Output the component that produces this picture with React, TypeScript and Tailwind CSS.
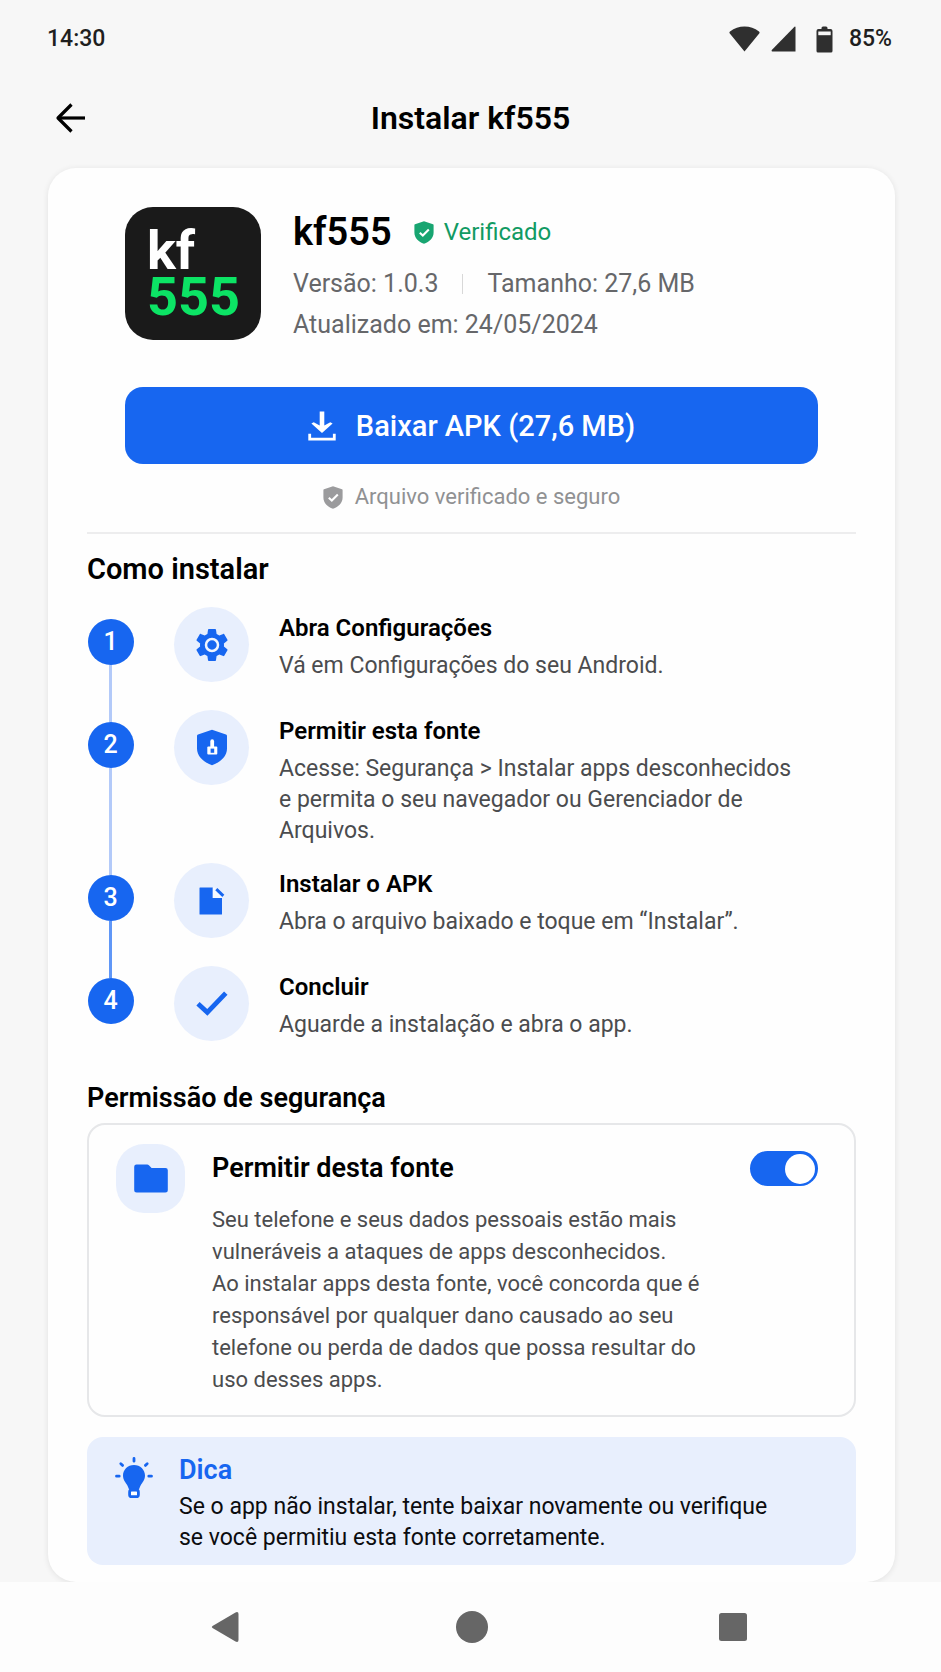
import { useState } from "react";
import type { ReactNode } from "react";

type Step = {
  title: string;
  text: string;
  icon: ReactNode;
  lineAbove: string;
  lineBelow: string;
};

function WifiIcon() {
  return (
    <svg width="31" height="26" viewBox="0 0 31 26" fill="#2f2f2f" aria-hidden="true">
      <path d="M15.500 25.500 L0.600 7.200 Q0 6.300 1 5.600 Q7.500 0.600 15.500 0.600 Q23.500 0.600 30 5.600 Q31 6.300 30.400 7.200 Z" />
    </svg>
  );
}

function SignalIcon() {
  return (
    <svg width="25" height="26" viewBox="0 0 25 26" fill="#2f2f2f" aria-hidden="true">
      <path d="M24.500 1 V25.500 H1.200 Q0 25 0.800 24 L23.500 0.800 Q24.300 0.200 24.500 1 Z" />
    </svg>
  );
}

function BatteryIcon() {
  return (
    <svg width="17" height="27" viewBox="0 0 17 27" aria-hidden="true">
      <path
        fill="#2f2f2f"
        d="M5.500 2 Q5.500 0.500 7 0.500 H10 Q11.500 0.500 11.500 2 V3 H14.500 Q16.500 3 16.500 5 V25 Q16.500 26.500 15 26.500 H2 Q0.500 26.500 0.500 25 V5 Q0.500 3 2.500 3 H5.500 Z"
      />
      <rect x="2.300" y="5.500" width="12.400" height="3.700" fill="#f7f7f7" />
    </svg>
  );
}

function ShieldCheck({ color }: { color: string }) {
  return (
    <svg width="20" height="23" viewBox="0 0 20 23" aria-hidden="true" className="shrink-0">
      <path
        fill={color}
        d="M10 0.300 L19 3.300 Q19.600 3.500 19.600 4.200 V11.500 C19.600 17 15.500 20.800 10 22.700 C4.500 20.800 0.400 17 0.400 11.500 V4.200 Q0.400 3.500 1 3.300 Z"
      />
      <path d="M5.800 11.800 L8.800 14.500 L14.800 8.600" fill="none" stroke="#fff" strokeWidth="2.100" />
    </svg>
  );
}

function DownloadIcon() {
  return (
    <svg width="28" height="30" viewBox="0 0 28 30" fill="none" aria-hidden="true">
      <path d="M11.700 0.500 H16.300 V14.500 L22.300 11.200 L24.600 12.600 L14 22 L3.400 12.600 L5.700 11.200 L11.700 14.500 Z" fill="#fff" />
      <path d="M1.700 22.800 V28.100 H26.300 V22.800" stroke="#fff" strokeWidth="2.800" />
    </svg>
  );
}

function GearIcon() {
  return (
    <svg width="40" height="40" viewBox="0 0 24 24" aria-hidden="true">
      <path
        fill="#1766f0"
        d="M19.140 12.940c.04-.3.06-.61.06-.94 0-.32-.02-.64-.07-.94l2.030-1.580c.18-.14.23-.41.12-.61l-1.920-3.320c-.12-.22-.37-.29-.59-.22l-2.390.96c-.5-.38-1.030-.7-1.620-.94l-.36-2.540c-.04-.24-.24-.41-.48-.41h-3.840c-.24 0-.43.17-.47.41l-.36 2.540c-.59.24-1.130.57-1.620.94l-2.390-.96c-.22-.08-.47 0-.59.22L2.740 8.870c-.12.21-.08.47.12.61l2.030 1.580c-.05.3-.09.63-.09.94s.02.64.07.94l-2.030 1.580c-.18.14-.23.41-.12.61l1.920 3.320c.12.22.37.29.59.22l2.390-.96c.5.38 1.030.7 1.620.94l.36 2.540c.05.24.24.41.48.41h3.840c.24 0 .44-.17.47-.41l.36-2.540c.59-.24 1.130-.56 1.620-.94l2.390.96c.22.08.47 0 .59-.22l1.920-3.320c.12-.22.07-.47-.12-.61l-2.010-1.580z"
      />
      <circle cx="12" cy="12" r="3.600" fill="#1766f0" stroke="#f1f5fe" strokeWidth="1.500" />
    </svg>
  );
}

function ShieldLockIcon() {
  return (
    <svg width="32" height="37" viewBox="0 0 32 37" aria-hidden="true">
      <path
        fill="#1766f0"
        d="M16 0.800 L30 5.600 Q31 6 31 7 V19.500 C31 27.500 24 33.500 16 36.200 C8 33.500 1 27.500 1 19.500 V7 Q1 6 2 5.600 Z"
      />
      <path d="M14.300 18 V12.500 Q14.300 10.300 16.200 10.300 Q18.100 10.300 18.100 12.500 V18 Z" fill="#fff" />
      <rect x="11.300" y="17.600" width="10" height="8" rx="1" fill="#fff" />
      <rect x="14.600" y="19.600" width="3.600" height="4.200" fill="#1766f0" />
    </svg>
  );
}

function FileIcon() {
  return (
    <svg width="26" height="28" viewBox="0 0 26 28" aria-hidden="true">
      <path fill="#1766f0" d="M1 0.500 H13.800 V11 H23 V27 Q23 27.500 22.500 27.500 H1 Q0.500 27.500 0.500 27 V1 Q0.500 0.500 1 0.500 Z" />
      <path d="M13.800 0.500 L15.500 0.500 L23 8 V11 H13.800 Z" fill="#f6f9ff" />
      <path d="M17.300 2.200 L24.300 8.800" stroke="#1766f0" strokeWidth="3" />
    </svg>
  );
}

function CheckIcon() {
  return (
    <svg width="32" height="25" viewBox="0 0 32 25" fill="none" aria-hidden="true">
      <path d="M2 12.800 L11.300 21.300 L29.800 2.200" stroke="#1766f0" strokeWidth="4.800" />
    </svg>
  );
}

function FolderIcon() {
  return (
    <svg width="34" height="29" viewBox="0 0 34 29" aria-hidden="true">
      <path
        fill="#1766f0"
        d="M2.500 0.500 H13.200 Q14.200 0.500 14.900 1.200 L17.600 4 H31.500 Q33.800 4 33.800 6.300 V26 Q33.800 28.500 31.300 28.500 H2.700 Q0.200 28.500 0.200 26 V2.800 Q0.200 0.500 2.500 0.500 Z"
      />
    </svg>
  );
}

function BulbIcon() {
  return (
    <svg width="38" height="42" viewBox="0 0 38 42" fill="none" aria-hidden="true">
      <path
        fill="#1766f0"
        d="M19 8 C25.300 8 30 12.700 30 18.600 C30 23 27.500 25.500 25.600 28.500 C24.400 30.400 24.600 32.500 23 32.500 H15 C13.400 32.500 13.600 30.400 12.400 28.500 C10.500 25.500 8 23 8 18.600 C8 12.700 12.700 8 19 8 Z"
      />
      <rect x="14.600" y="33" width="8.800" height="6.700" rx="2" fill="#fff" stroke="#1766f0" strokeWidth="2.800" />
      <path
        d="M19 1.500 V4.200 M5.800 6.800 L7.600 8.400 M32.200 6.800 L30.400 8.400 M1.500 19.200 H4.200 M33.800 19.200 H36.500"
        stroke="#1766f0"
        strokeWidth="2.800"
        strokeLinecap="round"
      />
    </svg>
  );
}

const steps: Step[] = [
  {
    title: "Abra Configurações",
    text: "Vá em Configurações do seu Android.",
    icon: <GearIcon />,
    lineAbove: "",
    lineBelow: "bg-[#b3caf9]",
  },
  {
    title: "Permitir esta fonte",
    text: "Acesse: Segurança > Instalar apps desconhecidos e permita o seu navegador ou Gerenciador de Arquivos.",
    icon: <ShieldLockIcon />,
    lineAbove: "bg-[#b3caf9]",
    lineBelow: "bg-[#b3caf9]",
  },
  {
    title: "Instalar o APK",
    text: "Abra o arquivo baixado e toque em “Instalar”.",
    icon: <FileIcon />,
    lineAbove: "bg-[#b3caf9]",
    lineBelow: "bg-[#6097f7]",
  },
  {
    title: "Concluir",
    text: "Aguarde a instalação e abra o app.",
    icon: <CheckIcon />,
    lineAbove: "bg-[#6097f7]",
    lineBelow: "",
  },
];

function StepRow({ step, index }: { step: Step; index: number }) {
  const last = index === steps.length - 1;
  return (
    <li className="flex">
      <div className="flex w-[47px] shrink-0 flex-col items-center">
        <span className={`h-3 w-[3px] ${step.lineAbove}`} />
        <span className="flex size-[46px] items-center justify-center rounded-full bg-[#1766f0] text-[25px] leading-8 font-medium text-white">
          {index + 1}
        </span>
        <span className={`w-[3px] flex-1 ${step.lineBelow}`} />
      </div>
      <div className="ml-10 flex size-[75px] shrink-0 items-center justify-center rounded-full bg-[#e8effd]">
        {step.icon}
      </div>
      <div className={`ml-[30px] min-h-[86px] flex-1 pt-1.5 ${last ? "" : "mb-[17px]"}`}>
        <h3 className="text-[24px] leading-[30px] font-semibold text-black">{step.title}</h3>
        <p className="mt-[7px] max-w-[520px] text-[23px] leading-[31px] text-[#4b4c4e]">{step.text}</p>
      </div>
    </li>
  );
}

export default function App() {
  const [allowed, setAllowed] = useState(true);

  return (
    <div className="flex min-h-screen flex-col bg-[#f7f7f7] font-['Roboto',sans-serif]">
      <div className="flex h-[78px] items-center justify-between pr-[49px] pl-[47px] text-[23px] leading-7 text-[#1f1f1f]">
        <time className="font-medium">14:30</time>
        <div className="flex items-center">
          <WifiIcon />
          <span className="ml-[11px]">
            <SignalIcon />
          </span>
          <span className="ml-5">
            <BatteryIcon />
          </span>
          <span className="ml-4 font-medium">85%</span>
        </div>
      </div>

      <header className="mb-2.5 grid h-20 grid-cols-[1fr_auto_1fr] items-center px-[54px]">
        <button type="button" aria-label="Voltar" className="justify-self-start">
          <svg width="34" height="32" viewBox="0 0 34 32" fill="none" stroke="#000" strokeWidth="3.200" aria-hidden="true">
            <path d="M31 16 H4" />
            <path d="M17.500 2.500 L4 16 L17.500 29.500" strokeLinejoin="round" />
          </svg>
        </button>
        <h1 className="text-[32px] leading-10 font-semibold text-black">Instalar kf555</h1>
      </header>

      <main className="pr-[46px] pl-12">
        <div className="rounded-[28px] bg-[#fefefe] px-[39px] pt-[39px] pb-[17px] shadow-[0_1px_6px_rgba(0,0,0,0.09)]">
          <section className="px-[38px]">
            <div className="flex min-h-[137px]">
              <div className="flex h-[133px] w-[136px] shrink-0 flex-col justify-center rounded-[28px] bg-[#1a1a1a] pl-[22px] text-[54px] leading-[46px] font-bold">
                <span className="text-white">kf</span>
                <span className="text-[#0ce465]">555</span>
              </div>
              <div className="ml-8 flex-1 pt-[3px]">
                <div className="flex items-center">
                  <h2 className="text-[38px] leading-[44px] font-semibold text-black">kf555</h2>
                  <span className="ml-[22px] flex items-center gap-2.5 text-[24px] leading-8 text-[#119a63]">
                    <ShieldCheck color="#18a571" />
                    Verificado
                  </span>
                </div>
                <div className="mt-[9px] flex items-center text-[25px] leading-[41px] text-[#66676a]">
                  <span>Versão: 1.0.3</span>
                  <span className="mx-6 h-5 w-px bg-[#d8d8d8]" />
                  <span>Tamanho: 27,6 MB</span>
                </div>
                <p className="text-[25px] leading-[41px] text-[#66676a]">Atualizado em: 24/05/2024</p>
              </div>
            </div>

            <button
              type="button"
              className="mt-[42px] flex h-[77px] w-full items-center justify-center gap-5 rounded-[18px] bg-[#1766f0] text-[29px] leading-9 font-medium text-white"
            >
              <DownloadIcon />
              Baixar APK (27,6 MB)
            </button>

            <p className="mt-[17px] flex items-center justify-center gap-3 text-[22px] leading-8 text-[#909193]">
              <ShieldCheck color="#9b9b9d" />
              Arquivo verificado e seguro
            </p>
          </section>

          <hr className="mt-[19px] border-t-2 border-[#ededee]" />

          <section>
            <h2 className="mt-[17px] text-[29px] leading-9 font-semibold text-black">Como instalar</h2>
            <ol className="mt-5">
              {steps.map((step, index) => (
                <StepRow key={step.title} step={step} index={index} />
              ))}
            </ol>
          </section>

          <section>
            <h2 className="mt-[29px] text-[27px] leading-[34px] font-semibold text-black">Permissão de segurança</h2>
            <div className="mt-2 flex rounded-[18px] border-2 border-[#e6e7e9] pt-[19px] pr-9 pb-[19px] pl-[27px]">
              <div className="flex size-[69px] shrink-0 items-center justify-center rounded-[28px] bg-[#e8effd]">
                <FolderIcon />
              </div>
              <div className="mt-[7px] ml-[27px] flex-1">
                <label htmlFor="allow-source" className="block text-[27px] leading-[34px] font-semibold text-black">
                  Permitir desta fonte
                </label>
                <div className="mt-[19px] text-[22px] leading-8 text-[#4b4c4e]">
                  <p>Seu telefone e seus dados pessoais estão mais vulneráveis a ataques de apps desconhecidos.</p>
                  <p>
                    Ao instalar apps desta fonte, você concorda que é responsável por qualquer dano causado ao seu
                    telefone ou perda de dados que possa resultar do uso desses apps.
                  </p>
                </div>
              </div>
              <input
                id="allow-source"
                type="checkbox"
                role="switch"
                checked={allowed}
                onChange={(event) => setAllowed(event.target.checked)}
                className="mt-[7px] ml-8 flex h-[35px] w-[68px] shrink-0 cursor-pointer appearance-none items-center rounded-full bg-[#b9bcc1] px-[3px] before:size-[30px] before:rounded-full before:bg-white before:transition-transform checked:bg-[#1766f0] checked:before:translate-x-8"
              />
            </div>
          </section>

          <aside className="mt-5 flex rounded-[16px] bg-[#e8effd] pt-4 pr-6 pb-3 pl-7">
            <div className="mt-1 shrink-0">
              <BulbIcon />
            </div>
            <div className="ml-[26px] flex-1">
              <h2 className="text-[27px] leading-[34px] font-semibold text-[#1766f0]">Dica</h2>
              <p className="mt-1 max-w-[600px] text-[23px] leading-[31px] text-[#0b0c0f]">
                Se o app não instalar, tente baixar novamente ou verifique se você permitiu esta fonte corretamente.
              </p>
            </div>
          </aside>
        </div>
      </main>

      <nav
        aria-label="Navegação do sistema"
        className="relative grid flex-1 grid-cols-[246fr_248fr_274fr] items-center bg-[#fdfdfd] pr-[71px] pl-[102px]"
      >
        <button type="button" aria-label="Anterior" className="justify-self-center">
          <svg width="28" height="32" viewBox="0 0 28 32" fill="#666" aria-hidden="true">
            <path d="M1.500 15 L24.500 1.400 Q27.500 0.200 27.500 3 V29 Q27.500 31.800 24.500 30.600 L1.500 17 Q0 16 1.500 15 Z" />
          </svg>
        </button>
        <button type="button" aria-label="Início" className="justify-self-center">
          <svg width="32" height="32" viewBox="0 0 32 32" fill="#666" aria-hidden="true">
            <circle cx="16" cy="16" r="16" />
          </svg>
        </button>
        <button type="button" aria-label="Recentes" className="justify-self-center">
          <svg width="28" height="28" viewBox="0 0 28 28" fill="#666" aria-hidden="true">
            <rect width="28" height="28" rx="2.500" />
          </svg>
        </button>
      </nav>
    </div>
  );
}
